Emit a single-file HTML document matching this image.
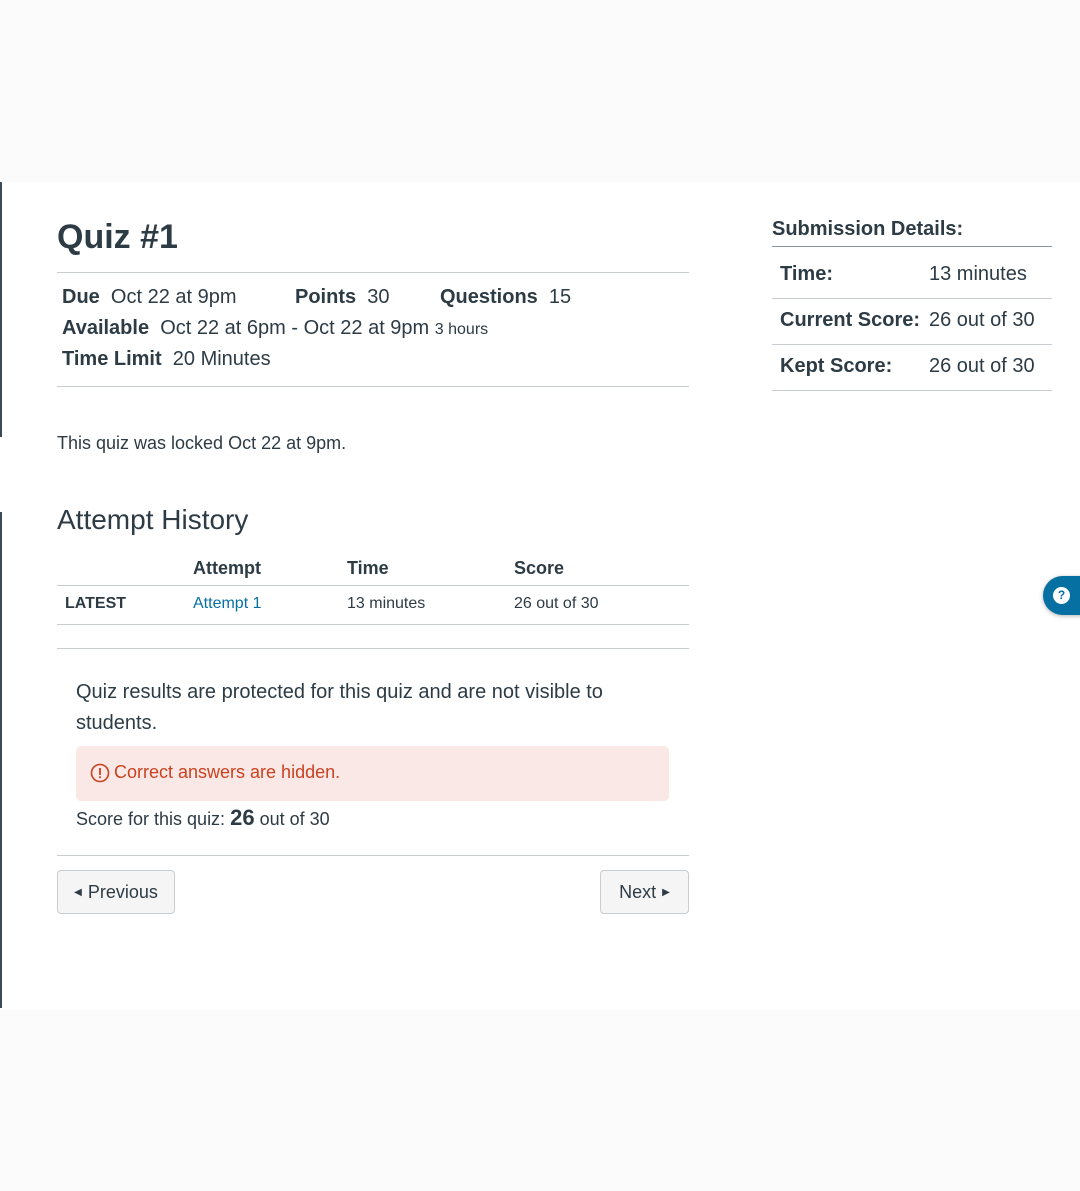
<!DOCTYPE html>
<html><head><meta charset="utf-8">
<style>
*{margin:0;padding:0;box-sizing:border-box}
body{width:1080px;height:1191px;background:#fbfbfb;font-family:"Liberation Sans",sans-serif;color:#2d3b45;position:relative;overflow:hidden}
.panel{position:absolute;left:0;top:182px;width:1080px;height:828px;background:#fff}
.a{position:absolute;white-space:nowrap}
.hr{position:absolute;height:1px;background:#c7cdd1}
b{font-weight:bold}
.btn{position:absolute;background:#f5f5f5;border:1px solid #c7cdd1;border-radius:4px;font-size:18px;color:#2d3b45;display:flex;align-items:center;justify-content:center}
</style></head><body>
<div class="panel"></div>
<div style="position:absolute;left:0;top:182px;width:2px;height:255px;background:#394b58"></div>
<div style="position:absolute;left:0;top:512px;width:2px;height:496px;background:#394b58"></div>

<div class="a" style="left:57px;top:218px;font-size:34px;font-weight:bold">Quiz #1</div>
<div class="hr" style="left:57px;top:272px;width:632px"></div>
<div class="a" style="left:62px;top:286px;font-size:20px"><b>Due</b>&nbsp; Oct 22 at 9pm</div>
<div class="a" style="left:295px;top:286px;font-size:20px"><b>Points</b>&nbsp; 30</div>
<div class="a" style="left:440px;top:286px;font-size:20px"><b>Questions</b>&nbsp; 15</div>
<div class="a" style="left:62px;top:317px;font-size:20px"><b>Available</b>&nbsp; Oct 22 at 6pm - Oct 22 at 9pm <span style="font-size:16px">3 hours</span></div>
<div class="a" style="left:62px;top:348px;font-size:20px"><b>Time Limit</b>&nbsp; 20 Minutes</div>
<div class="hr" style="left:57px;top:386px;width:632px"></div>
<div class="a" style="left:57px;top:433px;font-size:18px">This quiz was locked Oct 22 at 9pm.</div>

<div class="a" style="left:57px;top:504px;font-size:28px">Attempt History</div>
<div class="a" style="left:193px;top:558px;font-size:18px;font-weight:bold">Attempt</div>
<div class="a" style="left:347px;top:558px;font-size:18px;font-weight:bold">Time</div>
<div class="a" style="left:514px;top:558px;font-size:18px;font-weight:bold">Score</div>
<div class="hr" style="left:57px;top:585px;width:632px"></div>
<div class="a" style="left:65px;top:595px;font-size:16px;font-weight:bold">LATEST</div>
<div class="a" style="left:193px;top:595px;font-size:16px;color:#0770a3">Attempt 1</div>
<div class="a" style="left:347px;top:595px;font-size:16px">13 minutes</div>
<div class="a" style="left:514px;top:595px;font-size:16px">26 out of 30</div>
<div class="hr" style="left:57px;top:624px;width:632px"></div>
<div class="hr" style="left:57px;top:648px;width:632px"></div>

<div class="a" style="left:76px;top:677px;font-size:20px;line-height:31px">Quiz results are protected for this quiz and are not visible to<br>students.</div>
<div style="position:absolute;left:76px;top:746px;width:593px;height:55px;background:#f9e8e6;border-radius:5px"></div>
<div class="a" style="left:90px;top:762px;font-size:18px;color:#c9421f;display:flex;align-items:center">
<svg width="20" height="20" viewBox="0 0 20 20" style="margin-right:4px"><circle cx="10" cy="10" r="8.5" fill="none" stroke="#c9421f" stroke-width="1.6"/><rect x="9.1" y="5" width="1.8" height="7" fill="#c9421f"/><rect x="9.1" y="13.3" width="1.8" height="1.8" fill="#c9421f"/></svg>Correct answers are hidden.</div>
<div class="a" style="left:76px;top:805px;font-size:18px">Score for this quiz: <b style="font-size:22px">26</b> out of 30</div>
<div class="hr" style="left:57px;top:855px;width:632px"></div>
<div class="btn" style="left:57px;top:870px;width:118px;height:44px"><span style="font-size:10px;margin-right:6px">◀</span>Previous</div>
<div class="btn" style="left:600px;top:870px;width:89px;height:44px">Next<span style="font-size:10px;margin-left:6px">▶</span></div>

<div class="a" style="left:772px;top:218px;font-size:20px;font-weight:bold">Submission Details:</div>
<div class="hr" style="left:772px;top:246px;width:280px;background:#8b969e"></div>
<div class="a" style="left:780px;top:263px;font-size:20px;font-weight:bold">Time:</div>
<div class="a" style="left:929px;top:263px;font-size:20px">13 minutes</div>
<div class="hr" style="left:772px;top:298px;width:280px"></div>
<div class="a" style="left:780px;top:309px;font-size:20px;font-weight:bold">Current Score:</div>
<div class="a" style="left:929px;top:309px;font-size:20px">26 out of 30</div>
<div class="hr" style="left:772px;top:344px;width:280px"></div>
<div class="a" style="left:780px;top:355px;font-size:20px;font-weight:bold">Kept Score:</div>
<div class="a" style="left:929px;top:355px;font-size:20px">26 out of 30</div>
<div class="hr" style="left:772px;top:390px;width:280px"></div>

<div style="position:absolute;left:1043px;top:576px;width:60px;height:39px;background:#0770a3;border-radius:20px;box-shadow:0 1px 4px rgba(0,0,0,.3)"></div>
<div style="position:absolute;left:1053px;top:587px;width:17px;height:17px;border-radius:50%;background:#fff;color:#0770a3;font-size:12px;font-weight:bold;text-align:center;line-height:17px">?</div>
</body></html>
